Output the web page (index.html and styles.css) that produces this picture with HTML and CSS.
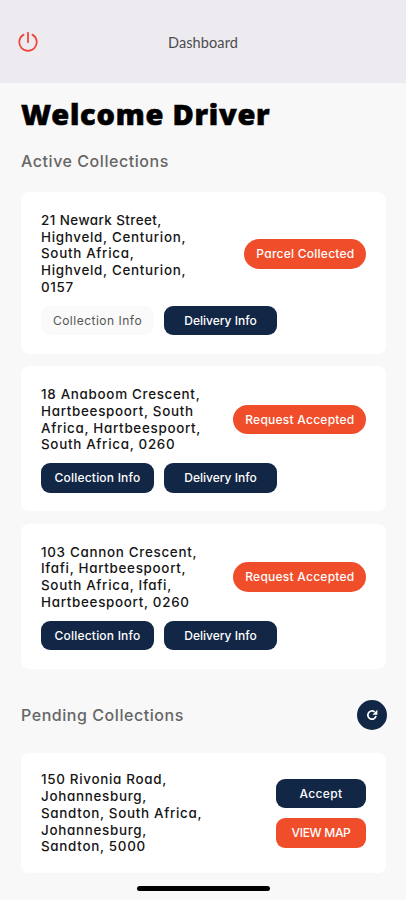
FILE: index.html
```
<!DOCTYPE html>
<html lang="en">
<head>
<meta charset="utf-8">
<title>Dashboard</title>
<link rel="stylesheet" href="styles.css">
</head>
<body>
<header class="topbar">
  <svg class="power" viewBox="0 0 20 20"><path d="M5.6 2.6A8.7 8.7 0 1 0 14.4 2.6M10 .8V10.2"/></svg>
  <span class="title">Dashboard</span>
</header>
<main>
  <h1>Welcome Driver</h1>
  <h2>Active Collections</h2>
  <section class="card">
    <div class="row">
      <p class="address"><span class="snug">21 Newark Street,</span><br>Highveld, Centurion,<br>South Africa,<br>Highveld, Centurion,<br>0157</p>
      <span class="pill">Parcel Collected</span>
    </div>
    <div class="actions"><button class="btn collection light">Collection Info</button><button class="btn">Delivery Info</button></div>
  </section>
  <section class="card">
    <div class="row">
      <p class="address">18 Anaboom Crescent,<br>Hartbeespoort, South<br>Africa, Hartbeespoort,<br>South Africa, 0260</p>
      <span class="pill">Request Accepted</span>
    </div>
    <div class="actions"><button class="btn collection">Collection Info</button><button class="btn">Delivery Info</button></div>
  </section>
  <section class="card">
    <div class="row">
      <p class="address">103 Cannon Crescent,<br>Ifafi, Hartbeespoort,<br>South Africa, Ifafi,<br>Hartbeespoort, 0260</p>
      <span class="pill">Request Accepted</span>
    </div>
    <div class="actions"><button class="btn collection">Collection Info</button><button class="btn">Delivery Info</button></div>
  </section>
  <div class="pending">
    <h2>Pending Collections</h2>
    <button class="refresh" aria-label="Refresh"><svg viewBox="0 0 12 12"><path class="arc" d="M8.6 2.9A4.1 4.1 0 1 0 10 6.9"/><path class="tip" d="M11.4 .7V5.7H6.4z"/></svg></button>
  </div>
  <section class="card last">
    <div class="row">
      <p class="address">150 Rivonia Road,<br>Johannesburg,<br>Sandton, South Africa,<br>Johannesburg,<br>Sandton, 5000</p>
      <div class="stack"><button class="btn accept">Accept</button><button class="btn orange">VIEW MAP</button></div>
    </div>
  </section>
</main>
<div class="home"></div>
</body>
</html>
```
FILE: styles.css
```
* { box-sizing: border-box; }
body {
  margin: 0;
  height: 900px;
  overflow: hidden;
  display: flex;
  flex-direction: column;
  background: #f8f8f8;
  font-family: Inter, sans-serif;
  font-feature-settings: "cv11";
}
.topbar {
  height: 83px;
  flex: none;
  background: #edebf0;
  display: grid;
  grid-template-columns: 38px 1fr 38px;
  align-items: center;
  padding: 1px 0 0;
}
.power {
  width: 20px;
  height: 20px;
  margin-left: 18px;
  fill: none;
  stroke: #ee473d;
  stroke-width: 1.8;
  stroke-linecap: round;
}
.title {
  font: 14.5px Lato, sans-serif;
  letter-spacing: 0.1px;
  color: #4b4a4e;
  text-align: center;
}
main { padding: 0 20px 0 21px; }
h1 {
  margin: 12px 0 0;
  font: 900 29px/38px "Noto Sans", sans-serif;
  letter-spacing: 0.75px;
  color: #000;
  -webkit-text-stroke: 0.6px #000;
  white-space: nowrap;
}
h2 {
  margin: 0;
  font-size: 16px;
  line-height: 24px;
  font-weight: 500;
  letter-spacing: 0.55px;
  color: #666;
}
h1 + h2 { margin: 16px 0 19px; }
.card {
  background: #fff;
  border-radius: 8px;
  padding: 20px 20px 18.7px 20px;
  margin: 0 0 12.5px;
}
.row { display: flex; justify-content: space-between; align-items: center; }
.address {
  margin: 0;
  font-size: 13.4px;
  line-height: 16.7px;
  font-weight: 550;
  letter-spacing: 0.7px;
  color: #151515;
  white-space: nowrap;
}
.snug { letter-spacing: 0.45px; }
.pill {
  height: 29.5px;
  padding: 0 11.5px 0 12px;
  border-radius: 15px;
  background: #f04e2b;
  color: #fff;
  font-size: 12px;
  line-height: 29px;
  font-weight: 550;
  letter-spacing: 0.25px;
  white-space: nowrap;
}
.actions { display: flex; gap: 10px; margin-top: 10px; }
.btn {
  width: 113px;
  height: 29.5px;
  padding: 0;
  border: 0;
  border-radius: 9px;
  background: #122646;
  color: #fff;
  font: 550 12px/29px Inter, sans-serif;
  font-feature-settings: "cv11";
  letter-spacing: 0;
}
.collection { letter-spacing: 0.2px; }
.light { background: #fafafa; color: #555; font-weight: 400; letter-spacing: 0.5px; }
.pending {
  display: flex;
  justify-content: space-between;
  align-items: center;
  height: 30px;
  margin: 31.5px -1px 22.5px 0;
}
.refresh {
  width: 30px;
  height: 30px;
  border: 0;
  padding: 0;
  border-radius: 50%;
  background: #122646;
  display: grid;
  place-items: center;
}
.refresh svg { width: 12px; height: 12px; }
.arc { fill: none; stroke: #fff; stroke-width: 1.7; }
.tip { fill: #fff; }
.stack { display: grid; gap: 10px; }
.stack .btn { width: 90px; }
.accept { letter-spacing: 0.4px; }
.orange { background: #f04e2b; letter-spacing: -0.3px; }
.last { padding-top: 18.7px; padding-bottom: 18.5px; }
.home {
  position: absolute;
  left: 137px;
  top: 885.5px;
  width: 133px;
  height: 5px;
  border-radius: 3px;
  background: #000;
}
```
